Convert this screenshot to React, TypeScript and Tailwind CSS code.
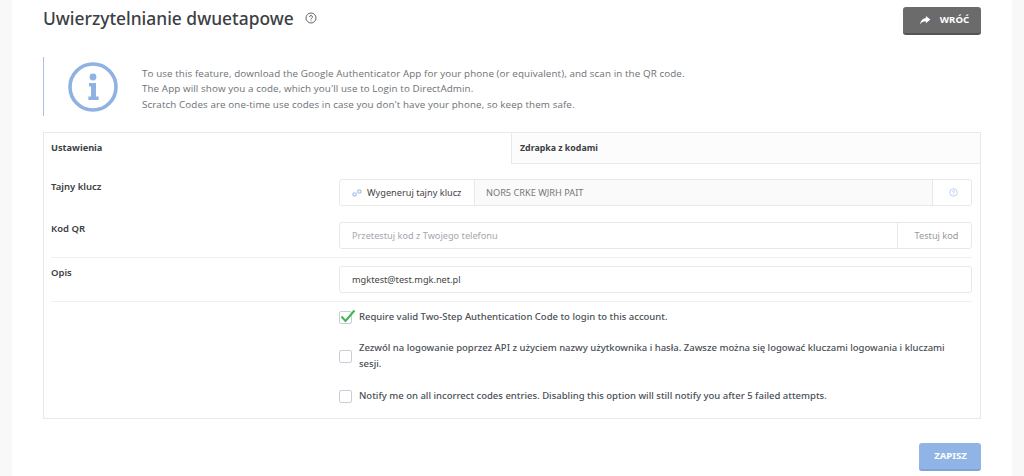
const sans = 'font-["Noto_Sans",sans-serif]';

function HelpIcon({ className }: { className: string }) {
  return (
    <svg viewBox="0 0 24 24" fill="none" stroke="currentColor" strokeWidth="2" className={className}>
      <circle cx="12" cy="12" r="10" />
      <path d="M9 9.2a3 3 0 0 1 5.900.8c0 2-3 2.400-3 4.200" strokeLinecap="round" />
      <circle cx="12" cy="17.400" r="1.100" fill="currentColor" stroke="none" />
    </svg>
  );
}

function InfoIcon() {
  return (
    <svg viewBox="0 0 50 50" className="h-[50px] w-[50px] text-[#8fb2e3]">
      <circle cx="25" cy="25" r="23" fill="none" stroke="currentColor" strokeWidth="3.600" />
      <circle cx="25" cy="15" r="3.400" fill="currentColor" />
      <path d="M21 21h7v13.500h2.600V38H20.400v-3.500H23V24.500h-2z" fill="currentColor" />
    </svg>
  );
}

function Check({ checked }: { checked?: boolean }) {
  return (
    <span className="relative block h-[13px] w-[13px] shrink-0 rounded-[2px] border border-[#c9ced6] bg-white">
      {checked && (
        <svg viewBox="0 0 16 14" className="absolute -top-[3px] left-0 h-[14px] w-[16px]">
          <path d="M1.500 7.500l4 4.500L14.500 1.500" fill="none" stroke="#3fb54f" strokeWidth="2" />
        </svg>
      )}
    </span>
  );
}

const options = [
  { text: 'Require valid Two-Step Authentication Code to login to this account.', checked: true, pad: 'pt-[7px] pb-[15px]' },
  {
    text: 'Zezwól na logowanie poprzez API z użyciem nazwy użytkownika i hasła. Zawsze można się logować kluczami logowania i kluczami sesji.',
    pad: 'pb-[16px]',
  },
  { text: 'Notify me on all incorrect codes entries. Disabling this option will still notify you after 5 failed attempts.', pad: 'pb-[15px]' },
];

export default function App() {
  return (
    <div className={`h-[476px] w-[1024px] overflow-hidden bg-[#f8f8f8] px-3 ${sans}`}>
      <div className="h-full bg-white px-[31px]">
        {/* Header */}
        <div className="flex h-[57px] items-start justify-between pt-[7px]">
          <div className="-mt-px flex h-6 items-center">
            <h1 className="text-[17.4px] font-medium leading-6 text-[#3c4044]">Uwierzytelnianie dwuetapowe</h1>
            <HelpIcon className="ml-[11px] h-3 w-3 text-[#666]" />
          </div>
          <button className="flex h-[28px] w-[78px] items-center justify-center gap-[9px] rounded-[3px] border-b-2 border-[#555] bg-[#6a6b6a] pl-1 text-[9.6px] font-bold text-white">
            <svg viewBox="0 0 12 10" className="h-[9px] w-[12px]" fill="currentColor">
              <path d="M7 0l5 4-5 4V5.700C4 5.700 2 6.800.500 9.500 1 5.500 3.500 2.700 7 2.300z" />
            </svg>
            WRÓĆ
          </button>
        </div>

        {/* Info box */}
        <div className="flex h-[59px] items-center border-l border-[#a9c2e4]">
          <div className="mx-[24px]">
            <InfoIcon />
          </div>
          <div className="pt-[5px] font-['Open_Sans',sans-serif] text-[9.8px] leading-[15.600px] tracking-[0.1px] text-[#6d7074]">
            <p>To use this feature, download the Google Authenticator App for your phone (or equivalent), and scan in the QR code.</p>
            <p>The App will show you a code, which you'll use to Login to DirectAdmin.</p>
            <p>Scratch Codes are one-time use codes in case you don't have your phone, so keep them safe.</p>
          </div>
        </div>

        {/* Card */}
        <div className="mt-4 h-[287px] border border-[#e8e8e8]">
          <div className="flex h-[31px] font-bold text-[#3c4044]">
            <div className="flex w-[467px] items-center pb-[2px] pl-[7px] text-[9.2px]">Ustawienia</div>
            <div className="flex flex-1 items-center border-b border-l border-[#e8e8e8] bg-[#fcfcfc] pl-2 pt-[1px] text-[8.8px]">Zdrapka z kodami</div>
          </div>

          <div className="pl-[7px] pr-[8px] text-[9.2px] text-[#555]">
            <div className="flex pt-[15px]">
              <label className="w-[288px] pt-[1px] text-[9.5px] font-semibold text-[#3c4044]">Tajny klucz</label>
              <div className="flex h-[27px] flex-1 rounded-[3px] border border-[#e8e8e8]">
                <div className="flex w-[135px] items-center gap-[5px] border-r border-[#e8e8e8] pl-3 text-[#444]">
                  <svg viewBox="0 0 12 10" className="h-[8px] w-[10px]" fill="none" stroke="#a9c2e4" strokeWidth="1.500">
                    <rect x="1" y="5" width="4" height="3.500" rx="1" />
                    <rect x="7" y="1.500" width="4" height="3.500" rx="1" />
                  </svg>
                  Wygeneruj tajny klucz
                </div>
                <div className="flex flex-1 items-center bg-[#fafafa] pl-[11px] text-[#777]">NOR5 CRKE WJRH PAIT</div>
                <div className="flex w-[39px] items-center justify-center border-l border-[#e8e8e8] pl-[3px]">
                  <HelpIcon className="h-[9px] w-[9px] text-[#a9c2ec]" />
                </div>
              </div>
            </div>

            <div className="flex border-b border-[#efefef] pb-[8px] pt-[16px]">
              <label className="w-[288px] text-[9.5px] font-semibold text-[#3c4044]">Kod QR</label>
              <div className="flex h-[27px] flex-1 rounded-[3px] border border-[#e8e8e8]">
                <div className="flex flex-1 items-center pl-3 text-[#a5a8ad]">Przetestuj kod z Twojego telefonu</div>
                <div className="flex w-[74px] items-center justify-center border-l border-[#e8e8e8] pl-[4px] text-[#999]">Testuj kod</div>
              </div>
            </div>

            <div className="flex border-b border-[#efefef] pb-[8px] pt-[8px]">
              <label className="w-[288px] text-[9.5px] font-semibold text-[#3c4044]">Opis</label>
              <div className="flex h-[27px] flex-1 items-center rounded-[3px] border border-[#e8e8e8] pl-3 text-[#444]">mgktest@test.mgk.net.pl</div>
            </div>

            <div className="pl-[288px] pr-[20px]">
              {options.map(o => (
                <div key={o.text} className={`flex items-center gap-[7px] ${o.pad}`}>
                  <Check checked={o.checked} />
                  <span className="text-[9.5px] font-medium leading-[16px] text-[#4a4f55]">{o.text}</span>
                </div>
              ))}
            </div>
          </div>
        </div>

        {/* Footer */}
        <div className="mt-[24px] flex justify-end">
          <button className="flex h-[28px] w-[62px] items-center justify-center rounded-[3px] border-b-2 border-[#7ea3d8] bg-[#91b4e6] pl-[1px] text-[9.6px] font-bold text-white">
            ZAPISZ
          </button>
        </div>
      </div>
    </div>
  );
}
